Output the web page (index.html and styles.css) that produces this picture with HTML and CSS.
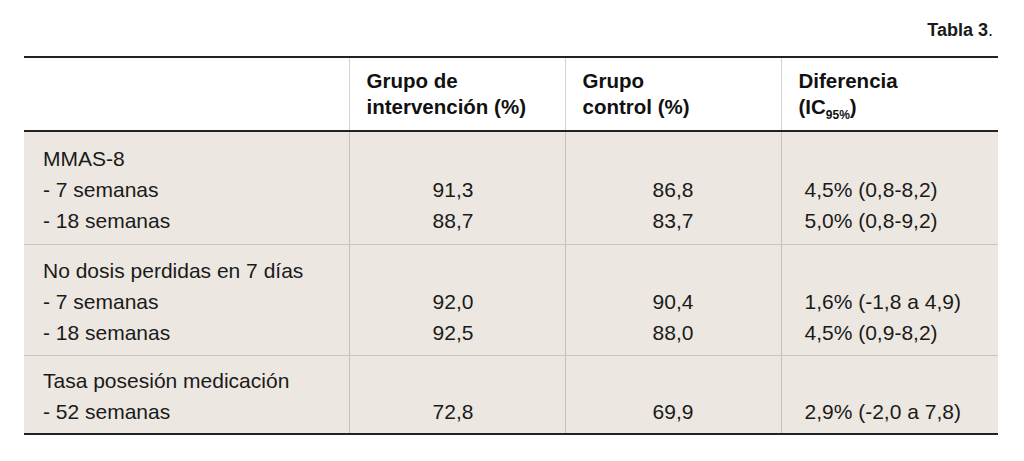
FILE: index.html
```html
<!DOCTYPE html>
<html lang="es">
<head>
<meta charset="utf-8">
<title>Tabla 3</title>
<link rel="stylesheet" href="styles.css">
</head>
<body>
<div class="page">
  <div class="caption"><b>Tabla 3</b>.</div>
  <table class="data">
    <colgroup>
      <col class="c1"><col class="c2"><col class="c3"><col class="c4">
    </colgroup>
    <thead>
      <tr>
        <th></th>
        <th>Grupo de<br>intervención (%)</th>
        <th>Grupo<br>control (%)</th>
        <th>Diferencia<br>(IC<sub>95%</sub>)</th>
      </tr>
    </thead>
    <tbody>
      <tr class="first">
        <td class="label">MMAS-8<br>- 7 semanas<br>- 18 semanas</td>
        <td class="num n2"><br>91,3<br>88,7</td>
        <td class="num n3"><br>86,8<br>83,7</td>
        <td class="diff"><br>4,5% (0,8-8,2)<br>5,0% (0,8-9,2)</td>
      </tr>
      <tr>
        <td class="label">No dosis perdidas en 7 días<br>- 7 semanas<br>- 18 semanas</td>
        <td class="num n2"><br>92,0<br>92,5</td>
        <td class="num n3"><br>90,4<br>88,0</td>
        <td class="diff"><br>1,6% (-1,8 a 4,9)<br>4,5% (0,9-8,2)</td>
      </tr>
      <tr class="last">
        <td class="label">Tasa posesión medicación<br>- 52 semanas</td>
        <td class="num n2"><br>72,8</td>
        <td class="num n3"><br>69,9</td>
        <td class="diff"><br>2,9% (-2,0 a 7,8)</td>
      </tr>
    </tbody>
  </table>
</div>
</body>
</html>
```
FILE: styles.css
```css
html, body {
  margin: 0;
  padding: 0;
  background: #ffffff;
}
.page {
  padding: 18px 26px 0 24px;
  font-family: "Liberation Sans", Arial, sans-serif;
  color: #1a1a1a;
}
.caption {
  text-align: right;
  font-size: 18px;
  line-height: 24px;
  padding-right: 5px;
  margin-bottom: 14px;
}
.caption b {
  font-weight: 700;
}
.data {
  width: 974px;
  border-collapse: collapse;
  table-layout: fixed;
}
.data .c1 { width: 325px; }
.data .c2 { width: 216px; }
.data .c3 { width: 216px; }
.data .c4 { width: 217px; }
.data thead tr {
  border-top: 2px solid #222;
  border-bottom: 2px solid #222;
  background: #ffffff;
}
.data th {
  text-align: left;
  vertical-align: top;
  font-weight: 700;
  font-size: 20.5px;
  line-height: 26px;
  padding: 10px 8px 10px 17px;
  border-left: 1px solid #d4d2ce;
  color: #111;
}
.data th:first-child {
  border-left: none;
}
.data th sub {
  font-size: 12px;
  line-height: 0;
  vertical-align: -5px;
}
.data tbody {
  background: #ece8e1;
}
.data tbody tr {
  border-bottom: 1px solid #c9c5bf;
}
.data tbody tr.last {
  border-bottom: 2px solid #222;
}
.data td {
  vertical-align: top;
  font-size: 21px;
  line-height: 31px;
  padding: 10px 8px 7px 19px;
  border-left: 1px solid #c4c1bb;
}
.data tr.first td {
  padding-top: 11px;
  padding-bottom: 8px;
}
.data tr.last td {
  padding-top: 9px;
  padding-bottom: 6px;
}
.data td.label {
  border-left: none;
}
.data td.num {
  text-align: center;
  padding-left: 0;
}
.data td.n2 {
  padding-right: 8px;
}
.data td.n3 {
  padding-right: 0;
}
.data td.diff {
  padding-left: 23px;
}
```
